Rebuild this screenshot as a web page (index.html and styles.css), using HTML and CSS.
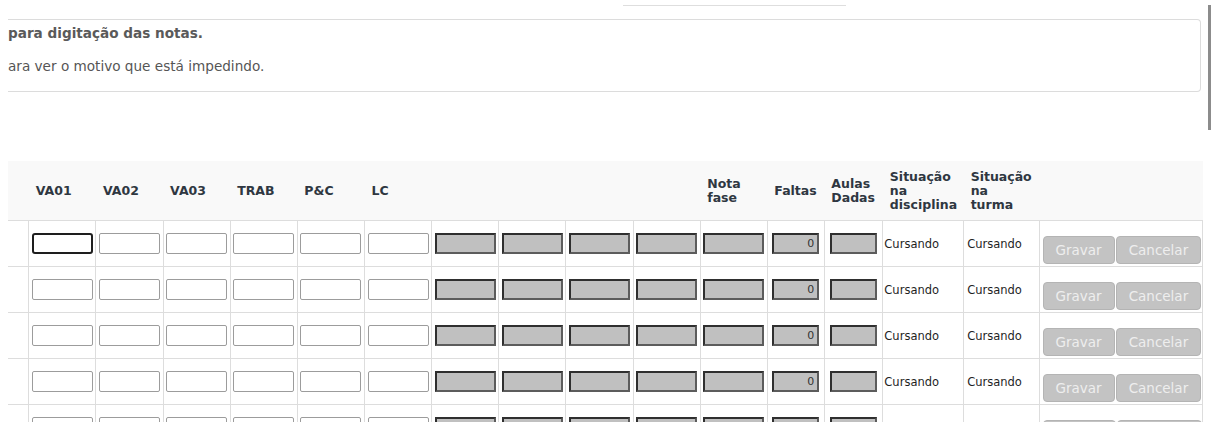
FILE: index.html
```html
<!DOCTYPE html>
<html lang="pt-BR">
<head>
<meta charset="utf-8">
<title>Digitação das notas</title>
<link rel="stylesheet" href="styles.css">
</head>
<body>
<div class="page">
  <div class="topline"></div>
  <div class="alert">
    <p class="alert-title">para digitação das notas.</p>
    <p class="alert-text">ara ver o motivo que está impedindo.</p>
  </div>
  <div class="grid-wrap">
    <table class="grid">
      <colgroup>
        <col class="w-first">
        <col class="w-note"><col class="w-note"><col class="w-note"><col class="w-note"><col class="w-note"><col class="w-note">
        <col class="w-note"><col class="w-note"><col class="w-note"><col class="w-note"><col class="w-note">
        <col class="w-faltas"><col class="w-aulas"><col class="w-sit1"><col class="w-sit2"><col class="w-actions">
      </colgroup>
      <thead>
        <tr>
          <th></th>
          <th>VA01</th><th>VA02</th><th>VA03</th><th>TRAB</th><th>P&amp;C</th><th>LC</th>
          <th></th><th></th><th></th><th></th>
          <th>Nota<br>fase</th>
          <th>Faltas</th>
          <th>Aulas<br>Dadas</th>
          <th>Situação<br>na<br>disciplina</th>
          <th>Situação<br>na<br>turma</th>
          <th></th>
        </tr>
      </thead>
      <tbody>
        <tr>
          <td class="c0"></td>
          <td><input class="in focused" type="text"></td>
          <td><input class="in" type="text"></td>
          <td><input class="in" type="text"></td>
          <td><input class="in" type="text"></td>
          <td><input class="in" type="text"></td>
          <td><input class="in" type="text"></td>
          <td><input class="in off" type="text" readonly></td>
          <td><input class="in off" type="text" readonly></td>
          <td><input class="in off" type="text" readonly></td>
          <td><input class="in off" type="text" readonly></td>
          <td><input class="in off" type="text" readonly></td>
          <td><input class="in off small" type="text" value="0" readonly></td>
          <td><input class="in off small" type="text" readonly></td>
          <td class="status">Cursando</td>
          <td class="status s2">Cursando</td>
          <td class="actions"><div class="btns"><button class="btn">Gravar</button><button class="btn">Cancelar</button></div></td>
        </tr>
        <tr>
          <td class="c0"></td>
          <td><input class="in" type="text"></td>
          <td><input class="in" type="text"></td>
          <td><input class="in" type="text"></td>
          <td><input class="in" type="text"></td>
          <td><input class="in" type="text"></td>
          <td><input class="in" type="text"></td>
          <td><input class="in off" type="text" readonly></td>
          <td><input class="in off" type="text" readonly></td>
          <td><input class="in off" type="text" readonly></td>
          <td><input class="in off" type="text" readonly></td>
          <td><input class="in off" type="text" readonly></td>
          <td><input class="in off small" type="text" value="0" readonly></td>
          <td><input class="in off small" type="text" readonly></td>
          <td class="status">Cursando</td>
          <td class="status s2">Cursando</td>
          <td class="actions"><div class="btns"><button class="btn">Gravar</button><button class="btn">Cancelar</button></div></td>
        </tr>
        <tr>
          <td class="c0"></td>
          <td><input class="in" type="text"></td>
          <td><input class="in" type="text"></td>
          <td><input class="in" type="text"></td>
          <td><input class="in" type="text"></td>
          <td><input class="in" type="text"></td>
          <td><input class="in" type="text"></td>
          <td><input class="in off" type="text" readonly></td>
          <td><input class="in off" type="text" readonly></td>
          <td><input class="in off" type="text" readonly></td>
          <td><input class="in off" type="text" readonly></td>
          <td><input class="in off" type="text" readonly></td>
          <td><input class="in off small" type="text" value="0" readonly></td>
          <td><input class="in off small" type="text" readonly></td>
          <td class="status">Cursando</td>
          <td class="status s2">Cursando</td>
          <td class="actions"><div class="btns"><button class="btn">Gravar</button><button class="btn">Cancelar</button></div></td>
        </tr>
        <tr>
          <td class="c0"></td>
          <td><input class="in" type="text"></td>
          <td><input class="in" type="text"></td>
          <td><input class="in" type="text"></td>
          <td><input class="in" type="text"></td>
          <td><input class="in" type="text"></td>
          <td><input class="in" type="text"></td>
          <td><input class="in off" type="text" readonly></td>
          <td><input class="in off" type="text" readonly></td>
          <td><input class="in off" type="text" readonly></td>
          <td><input class="in off" type="text" readonly></td>
          <td><input class="in off" type="text" readonly></td>
          <td><input class="in off small" type="text" value="0" readonly></td>
          <td><input class="in off small" type="text" readonly></td>
          <td class="status">Cursando</td>
          <td class="status s2">Cursando</td>
          <td class="actions"><div class="btns"><button class="btn">Gravar</button><button class="btn">Cancelar</button></div></td>
        </tr>
        <tr>
          <td class="c0"></td>
          <td><input class="in" type="text"></td>
          <td><input class="in" type="text"></td>
          <td><input class="in" type="text"></td>
          <td><input class="in" type="text"></td>
          <td><input class="in" type="text"></td>
          <td><input class="in" type="text"></td>
          <td><input class="in off" type="text" readonly></td>
          <td><input class="in off" type="text" readonly></td>
          <td><input class="in off" type="text" readonly></td>
          <td><input class="in off" type="text" readonly></td>
          <td><input class="in off" type="text" readonly></td>
          <td><input class="in off small" type="text" readonly></td>
          <td><input class="in off small" type="text" readonly></td>
          <td class="status"></td>
          <td class="status s2"></td>
          <td class="actions"><div class="btns"><button class="btn btn-g" aria-label="Gravar"></button><button class="btn btn-c" aria-label="Cancelar"></button></div></td>
        </tr>
      </tbody>
    </table>
  </div>
  <div class="scroll-thumb"></div>
</div>
</body>
</html>
```
FILE: styles.css
```css
html, body {
  margin: 0;
  padding: 0;
  background: #fff;
}
body {
  font-family: "DejaVu Sans", Verdana, sans-serif;
  overflow: hidden;
}
.page {
  position: relative;
  width: 1213px;
  height: 434px;
  overflow: hidden;
}
.topline {
  margin-left: 623px;
  width: 223px;
  height: 5px;
  border-bottom: 1px solid #dedede;
}
.alert {
  margin: 13px 0 0 8px;
  width: 1193px;
  box-sizing: border-box;
  border: 1px solid #dcdcdc;
  border-left: none;
  border-radius: 0 4px 4px 0;
  padding: 5px 0 17px 0;
  font-size: 13.6px;
  color: #555;
}
.alert p {
  margin: 0;
  line-height: 16px;
  white-space: nowrap;
}
.alert-title {
  font-weight: bold;
  color: #5a5a5a;
}
.alert .alert-text {
  margin-top: 17px;
}
.grid-wrap {
  margin: 69px 0 0 8px;
  width: 1195px;
  height: 261px;
  overflow: hidden;
}
.grid {
  border-collapse: separate;
  border-spacing: 0;
  table-layout: fixed;
  width: 1195px;
}
.w-first { width: 20.3px; }
.w-note { width: 67.15px; }
.w-faltas { width: 57px; }
.w-aulas { width: 58.5px; }
.w-sit1 { width: 80.8px; }
.w-sit2 { width: 75.4px; }
.w-actions { width: 164.35px; }

.grid th {
  height: 59px;
  box-sizing: border-box;
  background: #f9f9f9;
  font-size: 12.5px;
  font-weight: bold;
  color: #2f3741;
  text-align: left;
  vertical-align: middle;
  padding: 0 0 0 7.5px;
  line-height: 14px;
  white-space: nowrap;
}
.grid td {
  height: 46px;
  box-sizing: border-box;
  border-top: 1px solid #dddddd;
  border-left: 1px solid #dddddd;
  padding: 0;
  text-align: center;
  vertical-align: middle;
}
.grid td.c0 {
  border-left: none;
}
.in {
  display: inline-block;
  vertical-align: middle;
  box-sizing: border-box;
  width: 61px;
  height: 21px;
  margin: 0;
  padding: 0 3px;
  border: 1px solid #9c9c9c;
  border-radius: 2px;
  background: #fff;
  font-family: "DejaVu Sans", Verdana, sans-serif;
  font-size: 11px;
  color: #333;
  text-align: right;
  outline: none;
}
.in.focused {
  border: 2px solid #1e1e1e;
  border-radius: 3px;
}
.in.off {
  background: #c0c0c0;
  border: 2px solid #2f2f2f;
  border-right-color: #5c5c5c;
  border-bottom-color: #5c5c5c;
  border-radius: 0;
}
.in.small {
  width: 47px;
}
.grid td.status {
  text-align: left;
  padding-left: 1px;
  font-size: 11.5px;
  color: #1f1f1f;
  white-space: nowrap;
}
.grid td.status.s2 {
  padding-left: 3px;
}
.grid td.actions {
  border-right: 1px solid #dddddd;
  text-align: left;
  vertical-align: bottom;
  padding: 0 0 2px 3px;
}
.btns {
  display: flex;
  gap: 1px;
}
.btn {
  height: 28px;
  margin: 0;
  padding: 0 12px;
  border: 1px solid #b4b4b4;
  border-radius: 4px;
  background: #c3c3c3;
  color: #eeeeee;
  font-family: "DejaVu Sans", Verdana, sans-serif;
  font-size: 13.5px;
  line-height: 26px;
}
.btn-g { width: 73px; }
.btn-c { width: 85px; }
.scroll-thumb {
  position: absolute;
  left: 1208px;
  top: 5px;
  width: 3px;
  height: 125px;
  background: #8c8c8c;
}
```
